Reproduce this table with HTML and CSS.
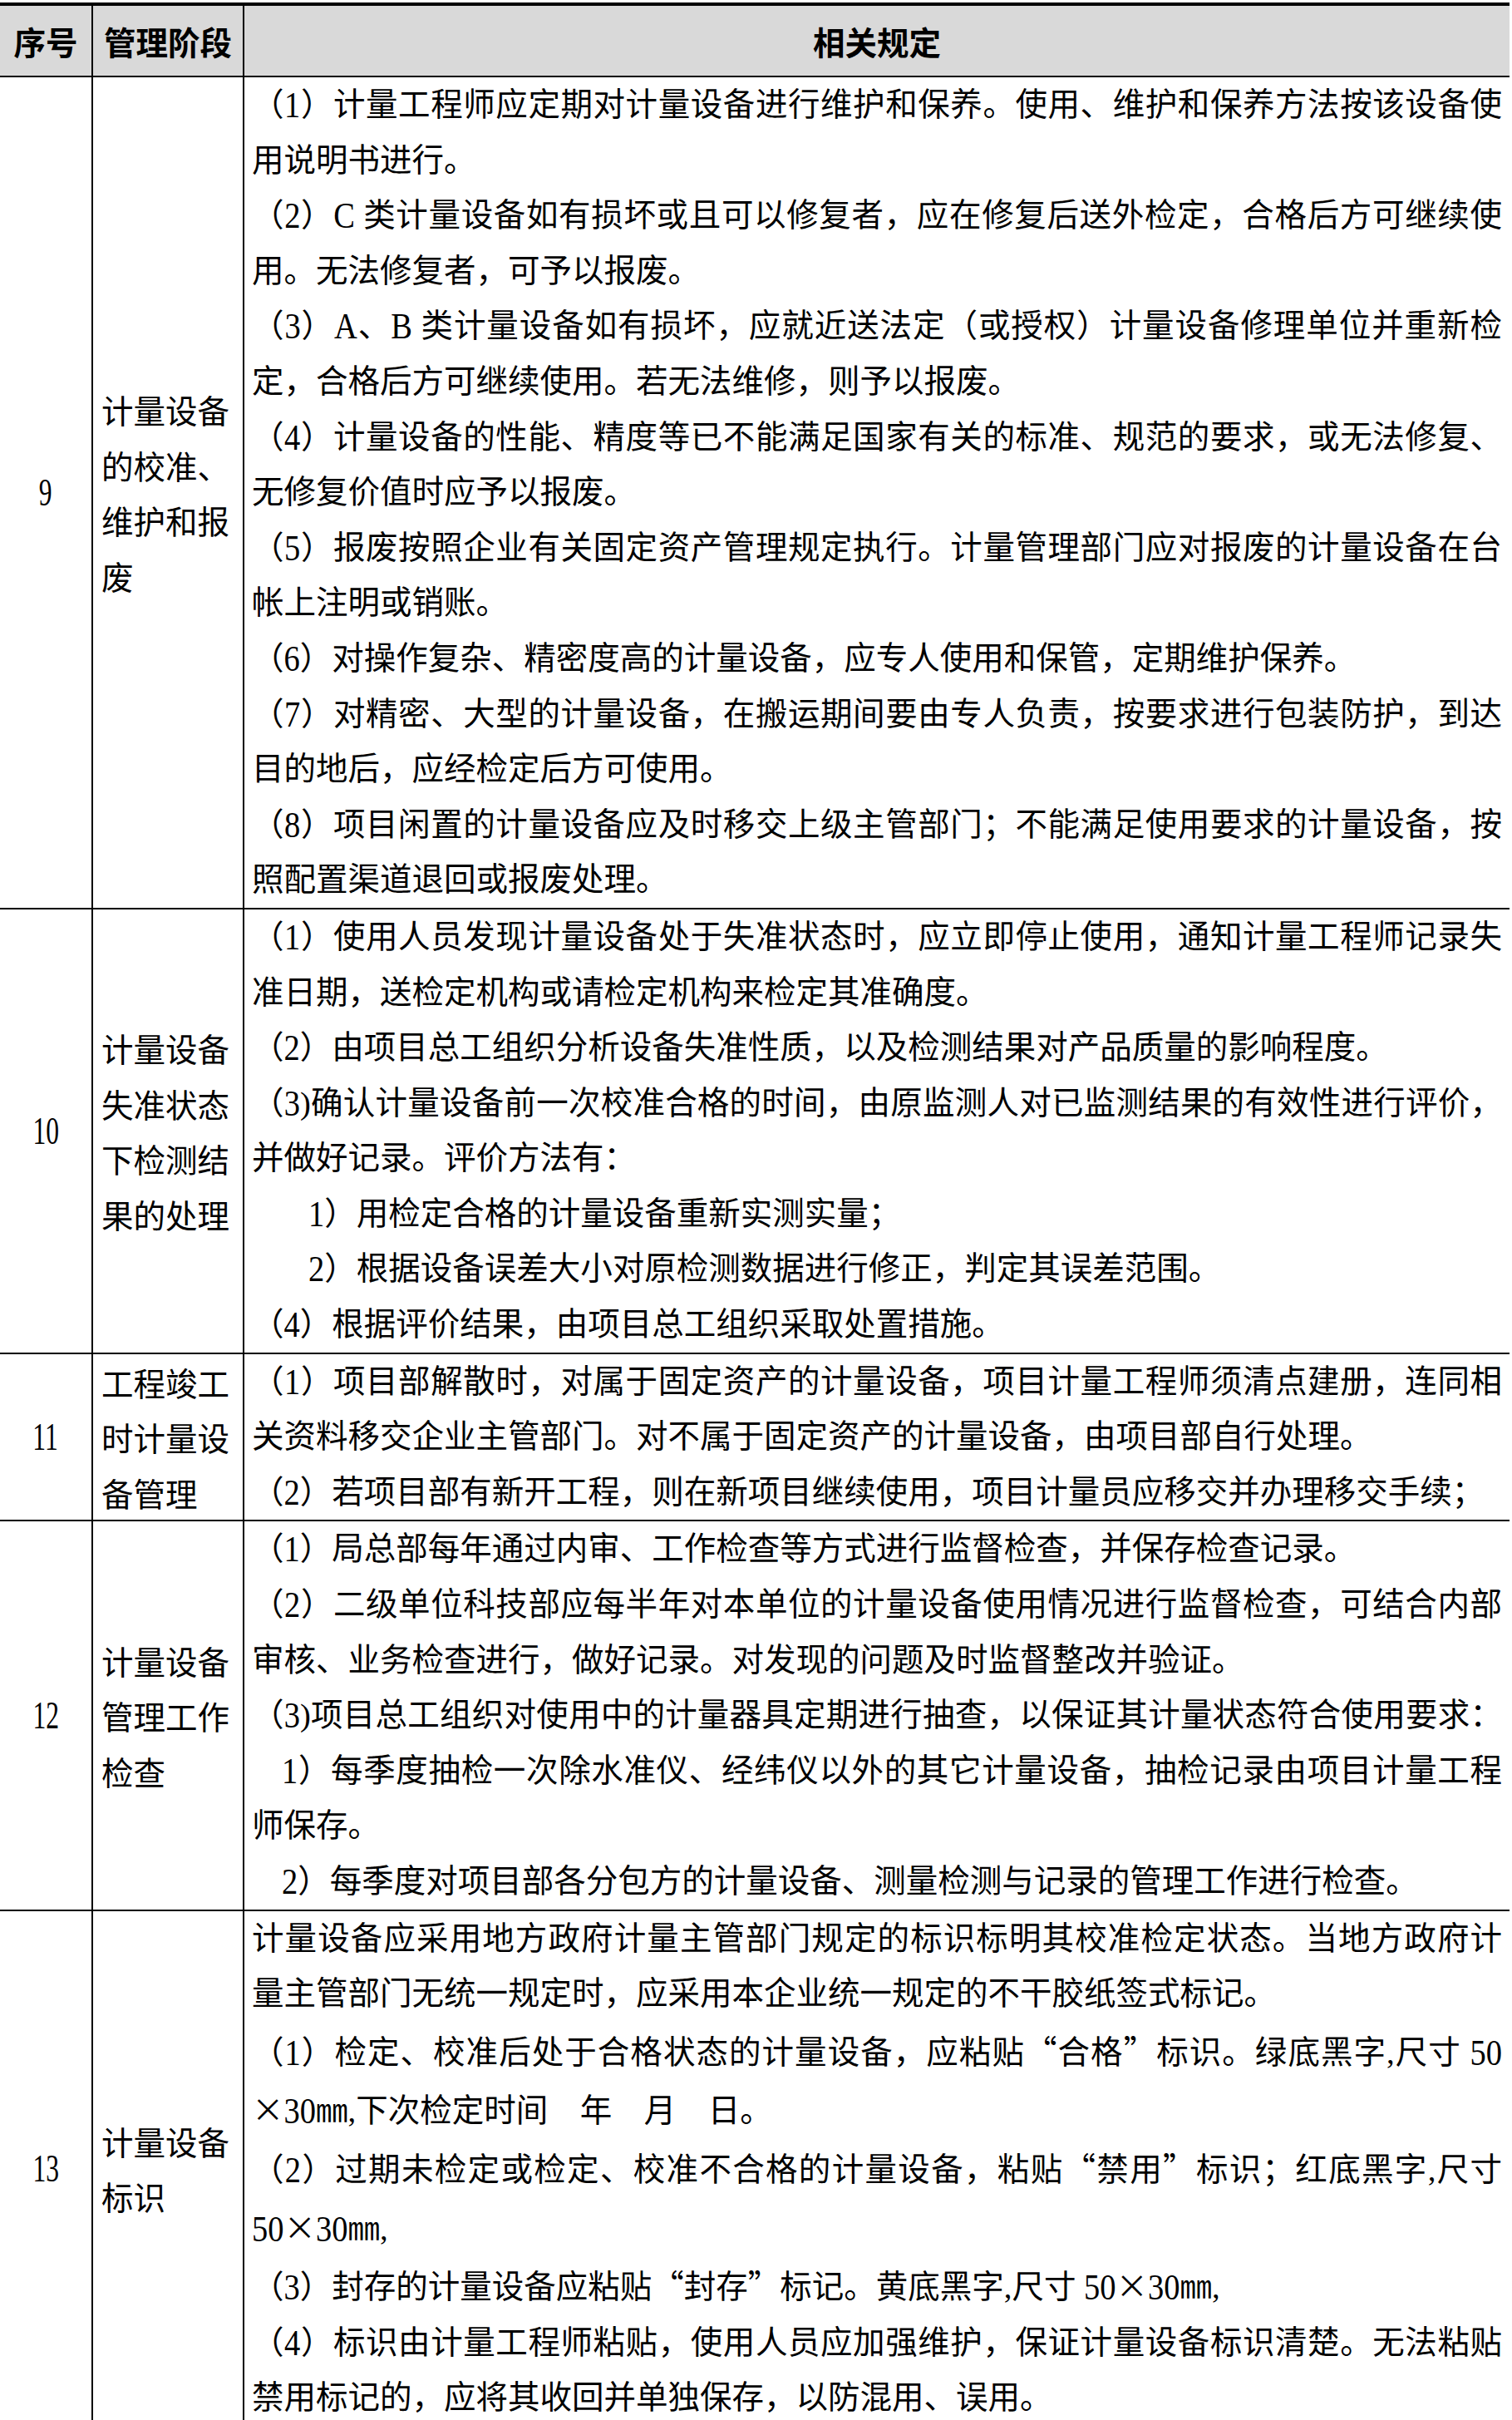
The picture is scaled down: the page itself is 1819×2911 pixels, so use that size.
FILE: index.html
```html
<!DOCTYPE html>
<html lang="zh-CN">
<head>
<meta charset="utf-8">
<title>计量设备管理规定</title>
<link rel="stylesheet" href="styles.css">
</head>
<body>
<table class="rules">
  <colgroup>
    <col class="c-no">
    <col class="c-stage">
    <col class="c-text">
  </colgroup>
  <thead>
    <tr>
      <th class="h-no">序号</th>
      <th class="h-stage">管理阶段</th>
      <th class="h-text">相关规定</th>
    </tr>
  </thead>
  <tbody>
    <tr>
      <td class="no"><span class="num">9</span></td>
      <td class="stage">计量设备的校准、维护和报废</td>
      <td class="text">
        <p class="ln j">（<span class="d">1</span>）计量工程师应定期对计量设备进行维护和保养。使用、维护和保养方法按该设备使</p>
        <p class="ln">用说明书进行。</p>
        <p class="ln j">（<span class="d">2</span>）<span class="d">C</span> 类计量设备如有损坏或且可以修复者，应在修复后送外检定，合格后方可继续使</p>
        <p class="ln">用。无法修复者，可予以报废。</p>
        <p class="ln j">（<span class="d">3</span>）<span class="d">A</span>、<span class="d">B</span> 类计量设备如有损坏，应就近送法定（或授权）计量设备修理单位并重新检</p>
        <p class="ln">定，合格后方可继续使用。若无法维修，则予以报废。</p>
        <p class="ln j">（<span class="d">4</span>）计量设备的性能、精度等已不能满足国家有关的标准、规范的要求，或无法修复、</p>
        <p class="ln">无修复价值时应予以报废。</p>
        <p class="ln j">（<span class="d">5</span>）报废按照企业有关固定资产管理规定执行。计量管理部门应对报废的计量设备在台</p>
        <p class="ln">帐上注明或销账。</p>
        <p class="ln">（<span class="d">6</span>）对操作复杂、精密度高的计量设备，应专人使用和保管，定期维护保养。</p>
        <p class="ln j">（<span class="d">7</span>）对精密、大型的计量设备，在搬运期间要由专人负责，按要求进行包装防护，到达</p>
        <p class="ln">目的地后，应经检定后方可使用。</p>
        <p class="ln j">（<span class="d">8</span>）项目闲置的计量设备应及时移交上级主管部门；不能满足使用要求的计量设备，按</p>
        <p class="ln">照配置渠道退回或报废处理。</p>
      </td>
    </tr>
    <tr>
      <td class="no"><span class="num">10</span></td>
      <td class="stage">计量设备失准状态下检测结果的处理</td>
      <td class="text">
        <p class="ln j">（<span class="d">1</span>）使用人员发现计量设备处于失准状态时，应立即停止使用，通知计量工程师记录失</p>
        <p class="ln">准日期，送检定机构或请检定机构来检定其准确度。</p>
        <p class="ln">（<span class="d">2</span>）由项目总工组织分析设备失准性质，以及检测结果对产品质量的影响程度。</p>
        <p class="ln j">（<span class="d">3</span>)确认计量设备前一次校准合格的时间，由原监测人对已监测结果的有效性进行评价，</p>
        <p class="ln">并做好记录。评价方法有：</p>
        <p class="ln ind2"><span class="d">1</span>）用检定合格的计量设备重新实测实量；</p>
        <p class="ln ind2"><span class="d">2</span>）根据设备误差大小对原检测数据进行修正，判定其误差范围。</p>
        <p class="ln">（<span class="d">4</span>）根据评价结果，由项目总工组织采取处置措施。</p>
      </td>
    </tr>
    <tr>
      <td class="no"><span class="num">11</span></td>
      <td class="stage">工程竣工时计量设备管理</td>
      <td class="text">
        <p class="ln j">（<span class="d">1</span>）项目部解散时，对属于固定资产的计量设备，项目计量工程师须清点建册，连同相</p>
        <p class="ln">关资料移交企业主管部门。对不属于固定资产的计量设备，由项目部自行处理。</p>
        <p class="ln">（<span class="d">2</span>）若项目部有新开工程，则在新项目继续使用，项目计量员应移交并办理移交手续；</p>
      </td>
    </tr>
    <tr>
      <td class="no"><span class="num">12</span></td>
      <td class="stage">计量设备管理工作检查</td>
      <td class="text">
        <p class="ln">（<span class="d">1</span>）局总部每年通过内审、工作检查等方式进行监督检查，并保存检查记录。</p>
        <p class="ln j">（<span class="d">2</span>）二级单位科技部应每半年对本单位的计量设备使用情况进行监督检查，可结合内部</p>
        <p class="ln">审核、业务检查进行，做好记录。对发现的问题及时监督整改并验证。</p>
        <p class="ln j">（<span class="d">3</span>)项目总工组织对使用中的计量器具定期进行抽查，以保证其计量状态符合使用要求：</p>
        <p class="ln j ind1"><span class="d">1</span>）每季度抽检一次除水准仪、经纬仪以外的其它计量设备，抽检记录由项目计量工程</p>
        <p class="ln">师保存。</p>
        <p class="ln ind1"><span class="d">2</span>）每季度对项目部各分包方的计量设备、测量检测与记录的管理工作进行检查。</p>
      </td>
    </tr>
    <tr class="last">
      <td class="no"><span class="num">13</span></td>
      <td class="stage">计量设备标识</td>
      <td class="text">
        <p class="ln j">计量设备应采用地方政府计量主管部门规定的标识标明其校准检定状态。当地方政府计</p>
        <p class="ln">量主管部门无统一规定时，应采用本企业统一规定的不干胶纸签式标记。</p>
        <p class="ln j">（<span class="d">1</span>）检定、校准后处于合格状态的计量设备，应粘贴<span class="cjk">“</span>合格<span class="cjk">”</span>标识。绿底黑字,尺寸 <span class="d">50</span></p>
        <p class="ln"><span class="cjk">×</span><span class="d">30</span>㎜,下次检定时间　年　月　日。</p>
        <p class="ln j">（<span class="d">2</span>）过期未检定或检定、校准不合格的计量设备，粘贴<span class="cjk">“</span>禁用<span class="cjk">”</span>标识；红底黑字,尺寸</p>
        <p class="ln"><span class="d">50</span><span class="cjk">×</span><span class="d">30</span>㎜,</p>
        <p class="ln">（<span class="d">3</span>）封存的计量设备应粘贴<span class="cjk">“</span>封存<span class="cjk">”</span>标记。黄底黑字,尺寸 <span class="d">50</span><span class="cjk">×</span><span class="d">30</span>㎜,</p>
        <p class="ln j">（<span class="d">4</span>）标识由计量工程师粘贴，使用人员应加强维护，保证计量设备标识清楚。无法粘贴</p>
        <p class="ln">禁用标记的，应将其收回并单独保存，以防混用、误用。</p>
      </td>
    </tr>
  </tbody>
</table>
</body>
</html>
```

FILE: styles.css
```css
html, body {
  margin: 0;
  padding: 0;
  background: #ffffff;
}

body {
  color: #000000;
  font-family: "Liberation Serif", "Noto Sans CJK SC", serif;
  font-size: 38.5px;
}

.rules {
  margin-top: 3px;
  width: 1816px;
  border-collapse: separate;
  border-spacing: 0;
  table-layout: fixed;
  border-top: 4px solid #000;
  border-bottom: 4px solid #000;
}

.c-no { width: 112px; }
.c-stage { width: 182px; }
.c-text { width: 1522px; }

.rules th,
.rules td {
  padding: 0;
  border-bottom: 2px solid #000;
  line-height: 66.6px;
  vertical-align: middle;
}

.rules th:nth-child(1),
.rules th:nth-child(2),
.rules td:nth-child(1),
.rules td:nth-child(2) {
  border-right: 2px solid #000;
}

.rules tr.last td {
  border-bottom: none;
}

.rules th {
  height: 84px;
  background: #d9d9d9;
  font-family: "Noto Sans CJK SC", sans-serif;
  font-weight: 700;
  text-align: center;
  line-height: 84px;
}

.no {
  text-align: center;
  font-family: "Liberation Serif", serif;
}

.num {
  display: inline-block;
  transform: scale(0.82, 1.22);
}

.stage {
  padding: 0 10px 0 10px !important;
  text-align: left;
  font-family: "Noto Sans CJK SC", sans-serif;
}

.text {
  padding: 0 9px 0 9px !important;
  font-family: "Liberation Serif", "Noto Sans CJK SC", sans-serif;
}

.ln {
  margin: 0;
  text-align: left;
}

.j {
  text-align: justify;
  text-align-last: justify;
}

.ind1 { padding-left: 36px; }
.ind2 { padding-left: 68px; }

.d {
  display: inline-block;
  transform: scaleY(1.15);
}

.cjk {
  font-family: "Noto Sans CJK SC", sans-serif;
}
```
